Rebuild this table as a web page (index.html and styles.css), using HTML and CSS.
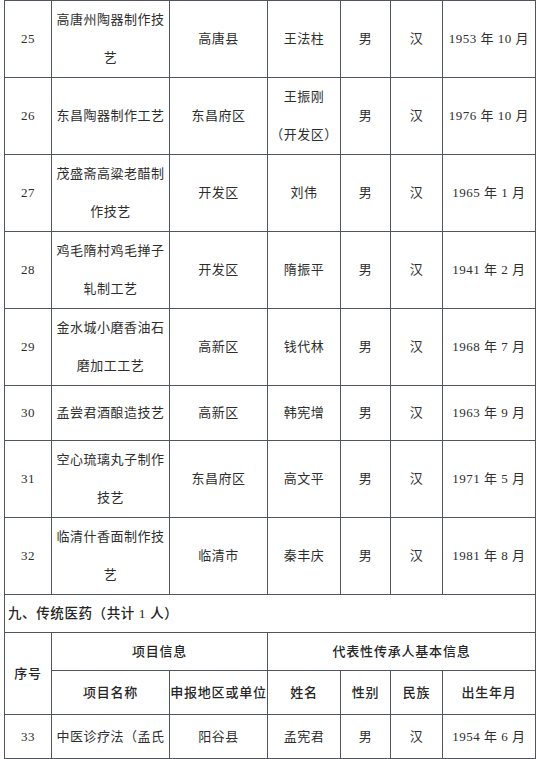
FILE: index.html
```html
<!DOCTYPE html>
<html lang="zh-CN">
<head>
<meta charset="utf-8">
<title>名录</title>
<link rel="stylesheet" href="styles.css">
</head>
<body>
<div class="page">
<table class="roster">
  <colgroup>
    <col class="c-no"><col class="c-proj"><col class="c-area"><col class="c-name"><col class="c-sex"><col class="c-eth"><col class="c-date">
  </colgroup>
  <tbody>
    <tr class="row-tall"><td>25</td><td>高唐州陶器制作技<br>艺</td><td>高唐县</td><td>王法柱</td><td>男</td><td>汉</td><td>1953 年 10 月</td></tr>
    <tr class="row-tall"><td>26</td><td>东昌陶器制作工艺</td><td>东昌府区</td><td>王振刚<br>（开发区）</td><td>男</td><td>汉</td><td>1976 年 10 月</td></tr>
    <tr class="row-tall"><td>27</td><td>茂盛斋高粱老醋制<br>作技艺</td><td>开发区</td><td>刘伟</td><td>男</td><td>汉</td><td>1965 年 1 月</td></tr>
    <tr class="row-tall"><td>28</td><td>鸡毛隋村鸡毛掸子<br>轧制工艺</td><td>开发区</td><td>隋振平</td><td>男</td><td>汉</td><td>1941 年 2 月</td></tr>
    <tr class="row-tall"><td>29</td><td>金水城小磨香油石<br>磨加工工艺</td><td>高新区</td><td>钱代林</td><td>男</td><td>汉</td><td>1968 年 7 月</td></tr>
    <tr class="row-short"><td>30</td><td>孟尝君酒酿造技艺</td><td>高新区</td><td>韩宪增</td><td>男</td><td>汉</td><td>1963 年 9 月</td></tr>
    <tr class="row-tall"><td>31</td><td>空心琉璃丸子制作<br>技艺</td><td>东昌府区</td><td>高文平</td><td>男</td><td>汉</td><td>1971 年 5 月</td></tr>
    <tr class="row-tall"><td>32</td><td>临清什香面制作技<br>艺</td><td>临清市</td><td>秦丰庆</td><td>男</td><td>汉</td><td>1981 年 8 月</td></tr>
    <tr class="row-section"><td colspan="7" class="section">九、传统医药（共计 1 人）</td></tr>
    <tr class="row-head1"><th rowspan="2">序号</th><th colspan="2">项目信息</th><th colspan="4">代表性传承人基本信息</th></tr>
    <tr class="row-head2"><th>项目名称</th><th>申报地区或单位</th><th>姓名</th><th>性别</th><th>民族</th><th>出生年月</th></tr>
    <tr class="row-last"><td>33</td><td>中医诊疗法（孟氏</td><td>阳谷县</td><td>孟宪君</td><td>男</td><td>汉</td><td>1954 年 6 月</td></tr>
  </tbody>
</table>
</div>
</body>
</html>
```

FILE: styles.css
```css
html, body {
  margin: 0;
  padding: 0;
  background: #ffffff;
}

.page {
  padding: 0 2px 0 4px;
}

.roster {
  width: 531px;
  table-layout: fixed;
  border-collapse: collapse;
  font-family: "Liberation Serif", "Noto Sans CJK SC", serif;
  color: #2e2e2e;
  font-size: 13px;
}

.c-no { width: 47px; }
.c-proj { width: 118px; }
.c-area { width: 98px; }
.c-name { width: 73px; }
.c-sex { width: 50px; }
.c-eth { width: 52px; }
.c-date { width: 93px; }

.roster td,
.roster th {
  border: 1.5px solid #505560;
  text-align: center;
  vertical-align: middle;
  padding: 0;
  white-space: nowrap;
  line-height: 38px;
  letter-spacing: 0.5px;
  font-weight: 400;
}

.row-tall { height: 75px; }
.row-short { height: 55px; }
.row-section { height: 38px; }
.row-head1 { height: 38px; }
.row-head2 { height: 44px; }
.row-last { height: 44px; }

.roster .section {
  text-align: left;
  padding-left: 3px;
  font-weight: 500;
  font-size: 13.5px;
  letter-spacing: 0.6px;
  line-height: 20px;
  color: #262626;
}

.roster th {
  font-weight: 500;
  font-size: 13px;
  letter-spacing: 0.8px;
  line-height: 20px;
  color: #262626;
}
```
